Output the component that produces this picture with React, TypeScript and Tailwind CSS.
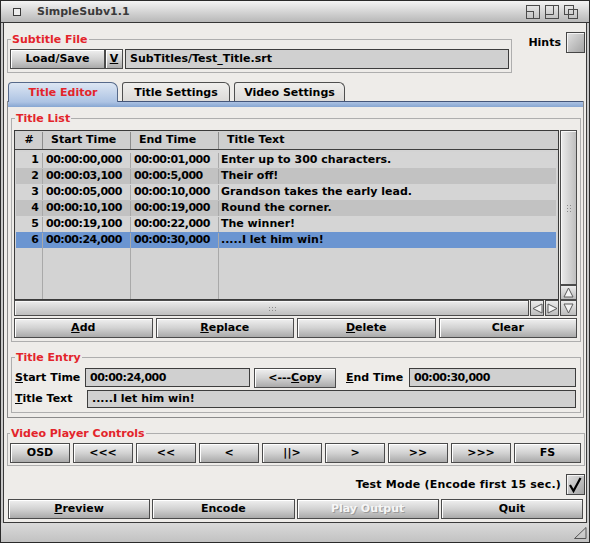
import type { ReactNode } from 'react';

type Row = [string, string, string, string];

const rows: Row[] = [
  ['1', '00:00:00,000', '00:00:01,000', 'Enter up to 300 characters.'],
  ['2', '00:00:03,100', '00:00:5,000', 'Their off!'],
  ['3', '00:00:05,000', '00:00:10,000', 'Grandson takes the early lead.'],
  ['4', '00:00:10,100', '00:00:19,000', 'Round the corner.'],
  ['5', '00:00:19,100', '00:00:22,000', 'The winner!'],
  ['6', '00:00:24,000', '00:00:30,000', '.....I let him win!'],
];

const videoButtons = ['OSD', '<<<', '<<', '<', '||>', '>', '>>', '>>>'];

function Btn({
  children,
  className = '',
  disabled = false,
}: {
  children: ReactNode;
  className?: string;
  disabled?: boolean;
}) {
  return (
    <div
      className={`flex h-[20px] items-center justify-center border border-[#4b4b4b] bg-linear-to-b from-[#f0f0f0] via-[#d2d2d2] to-[#aaaaaa] pt-[1px] shadow-[inset_1px_1px_0_#ffffff] ${
        disabled ? 'text-[#f6f6f6] [text-shadow:1px_1px_0_#9a9a9a]' : 'text-black'
      } ${className}`}
    >
      {children}
    </div>
  );
}

function Field({ children, className = '' }: { children?: ReactNode; className?: string }) {
  return (
    <div className={`flex items-center border border-[#3d3d3d] bg-[#d0d0d0] pt-[1px] pl-[4px] ${className}`}>
      {children}
    </div>
  );
}

function Group({
  label,
  className = '',
  legendClass = 'ml-[1px]',
  children,
}: {
  label: string;
  className?: string;
  legendClass?: string;
  children: ReactNode;
}) {
  return (
    <fieldset className={`min-w-0 border border-[#aeaeae] ${className}`}>
      <legend className={`px-[1px] leading-[14px] text-[#e3242b] ${legendClass}`}>
        <span className="relative top-[1px]">{label}</span>
      </legend>
      {children}
    </fieldset>
  );
}

function CheckBox({ checked = false }: { checked?: boolean }) {
  return (
    <div className="flex h-[21px] w-[19px] items-center justify-center border border-[#454545] bg-linear-to-br from-[#e2e2e2] to-[#a4a4a4] shadow-[inset_1px_1px_0_#f4f4f4]">
      {checked && (
        <svg width="17" height="19" viewBox="0 0 17 19">
          <path d="M3 10 L6.5 16 L13.5 3" fill="none" stroke="#000" strokeWidth="2.2" />
        </svg>
      )}
    </div>
  );
}

function Arrow({ dir, className = '' }: { dir: 'up' | 'down' | 'left' | 'right'; className?: string }) {
  const pts = {
    up: '5.5,1 10,10 1,10',
    down: '1,1 10,1 5.5,10',
    left: '1,5.5 10,1 10,10',
    right: '1,1 10,5.5 1,10',
  }[dir];
  return (
    <div
      className={`flex items-center justify-center border border-[#4b4b4b] bg-linear-to-b from-[#ececec] to-[#bdbdbd] ${className}`}
    >
      <svg width="11" height="11" viewBox="0 0 11 11">
        <polygon points={pts} fill="#f4f4f4" stroke="#5a5a5a" strokeWidth="1" />
      </svg>
    </div>
  );
}

function Dots({ vertical }: { vertical?: boolean }) {
  const w = vertical ? 5 : 8;
  const h = vertical ? 8 : 5;
  const dots = [];
  for (let i = 0; i < 3; i++) {
    for (let j = 0; j < 2; j++) {
      const x = vertical ? 1 + j * 3 : 1 + i * 3;
      const y = vertical ? 1 + i * 3 : 1 + j * 3;
      dots.push(<rect key={`${i}-${j}`} x={x} y={y} width="1" height="1" fill="#8c8c8c" />);
    }
  }
  return (
    <svg width={w} height={h} viewBox={`0 0 ${w} ${h}`}>
      {dots}
    </svg>
  );
}

function TitleGadgets() {
  return (
    <div className="ml-auto mr-[11px] flex gap-[5px]">
      <svg width="14" height="14" viewBox="0 0 14 14">
        <rect x="0.5" y="0.5" width="13" height="13" fill="none" stroke="#4a4a4a" />
        <rect x="0.5" y="6.5" width="7" height="7" fill="none" stroke="#4a4a4a" />
      </svg>
      <svg width="14" height="14" viewBox="0 0 14 14">
        <rect x="0.5" y="0.5" width="13" height="13" fill="none" stroke="#4a4a4a" />
        <path d="M8.5 0.5 V9.5 H0.5" fill="none" stroke="#4a4a4a" />
      </svg>
      <svg width="14" height="14" viewBox="0 0 14 14">
        <rect x="0.5" y="0.5" width="9" height="9" fill="none" stroke="#4a4a4a" />
        <rect x="4.5" y="4.5" width="9" height="9" fill="none" stroke="#4a4a4a" />
      </svg>
    </div>
  );
}

function TitleList() {
  return (
    <Group label="Title List" className="pl-[2px] pr-[3px] pt-[5px] pb-[3px]">
      <div className="grid grid-cols-[545px_17px] grid-rows-[170px_16px] gap-x-[1px]">
        <div className="flex flex-col border border-[#3a3a3a] bg-[#d3d3d3]">
          <div className="flex h-[19px] shrink-0 border-b border-[#3f3f3f] bg-[#cfcfcf] pt-[1px] pl-[1px] pr-[2px]">
            <div className="flex w-[27px] items-center justify-center border-r border-[#8d8d8d]">#</div>
            <div className="flex w-[88px] items-center border-r border-[#8d8d8d] pl-[8px]">Start Time</div>
            <div className="flex w-[88px] items-center border-r border-[#8d8d8d] pl-[8px]">End Time</div>
            <div className="flex flex-1 items-center pl-[8px]">Title Text</div>
          </div>
          <div className="flex flex-1 flex-col pt-[2px] pl-[1px] pr-[2px]">
            {rows.map(([n, start, end, text], i) => (
              <div
                key={n}
                className={`flex h-[16px] shrink-0 pt-[1px] ${
                  i === 5 ? 'bg-[#6b95d1]' : i % 2 === 1 ? 'bg-[#c2c2c2]' : 'bg-[#d5d5d5]'
                }`}
              >
                <div className="flex w-[27px] items-center justify-end border-r border-[#a9a9a9] pr-[3px]">{n}</div>
                <div className="flex w-[88px] items-center border-r border-[#a9a9a9] pl-[3px] tracking-[-0.5px]">
                  {start}
                </div>
                <div className="flex w-[88px] items-center border-r border-[#a9a9a9] pl-[3px] tracking-[-0.5px]">
                  {end}
                </div>
                <div className="flex flex-1 items-center whitespace-nowrap pl-[2px]">{text}</div>
              </div>
            ))}
            <div className="flex flex-1">
              <div className="w-[27px] border-r border-[#a9a9a9]" />
              <div className="w-[88px] border-r border-[#a9a9a9]" />
              <div className="w-[88px] border-r border-[#a9a9a9]" />
            </div>
          </div>
        </div>
        <div className="flex flex-col">
          <div className="flex flex-1 items-center justify-center border border-[#4b4b4b] bg-linear-to-r from-[#ececec] to-[#bfbfbf] shadow-[inset_1px_1px_0_#f8f8f8]">
            <Dots vertical />
          </div>
          <Arrow dir="up" className="h-[15px]" />
        </div>
        <div className="flex gap-[1px]">
          <div className="flex flex-1 items-center justify-center border border-[#4b4b4b] bg-linear-to-b from-[#ececec] to-[#bfbfbf] shadow-[inset_1px_1px_0_#f8f8f8]">
            <Dots />
          </div>
          <Arrow dir="left" className="w-[14px]" />
          <Arrow dir="right" className="w-[14px]" />
        </div>
        <Arrow dir="down" />
      </div>
      <div className="mt-[2px] flex gap-[3px]">
        <Btn className="flex-1">
          <u>A</u>dd
        </Btn>
        <Btn className="flex-1">
          <u>R</u>eplace
        </Btn>
        <Btn className="flex-1">
          <u>D</u>elete
        </Btn>
        <Btn className="flex-1">Clear</Btn>
      </div>
    </Group>
  );
}

function TitleEntry() {
  return (
    <Group label="Title Entry" legendClass="ml-0" className="mt-[8px] pl-[3px] pr-[4px] pt-[4px] pb-[4px]">
      <div className="flex h-[19px]">
        <div className="flex w-[70px] items-center pt-[1px]">
          <u>S</u>tart Time
        </div>
        <Field className="w-[165px] tracking-[-0.5px]">00:00:24,000</Field>
        <Btn className="ml-[4px] h-[19px] w-[82px]">
          {'<---'}
          <u>C</u>opy
        </Btn>
        <div className="ml-[10px] flex w-[59px] items-center pt-[1px]">
          <u>E</u>nd Time
        </div>
        <Field className="ml-[4px] flex-1 tracking-[-0.5px]">00:00:30,000</Field>
      </div>
      <div className="mt-[3px] flex h-[18px]">
        <div className="flex w-[72px] items-center pt-[1px]">
          <u>T</u>itle Text
        </div>
        <Field className="flex-1">.....I let him win!</Field>
      </div>
    </Group>
  );
}

export default function App() {
  return (
    <div className="flex h-[543px] w-[590px] flex-col border border-[#2a2a2a] bg-[#c8c8c8] font-['DejaVu_Sans',sans-serif] text-[11px] font-bold text-black">
      <div className="flex h-[22px] shrink-0 items-center border-b border-[#353535] bg-linear-to-b from-[#f4f4f4] to-[#b8b8b8]">
        <div className="ml-[12px] h-[8px] w-[8px] border border-[#3a3a3a] bg-[#ececec]" />
        <span className="ml-[16px] pt-[2px] text-[#3a3a3a]">SimpleSubv1.1</span>
        <TitleGadgets />
      </div>

      <div className="mx-[2px] flex h-[500px] shrink-0 flex-col border-x border-b border-[#3a3a3a] bg-[#eeece9]">
        <div className="flex items-start pt-[9px] pl-[3px] pr-[1px]">
          <Group label="Subtitle File" className="w-[505px] px-[2px] pt-[3px] pb-[3px]">
            <div className="flex h-[20px]">
              <Btn className="w-[95px]">Load/Save</Btn>
              <Btn className="w-[18px]">
                <u>V</u>
              </Btn>
              <Field className="ml-[2px] flex-1">SubTitles/Test_Title.srt</Field>
            </div>
          </Group>
          <div className="ml-auto flex items-center gap-[5px]">
            <span className="pt-[1px]">Hints</span>
            <CheckBox />
          </div>
        </div>

        <div className="ml-[4px] mt-[9px] flex items-end gap-[4px]">
          <div className="relative z-10 -mb-px flex h-[20px] w-[110px] items-center justify-center rounded-tl-[4px] rounded-tr-[7px] border-x border-t border-[#56698a] bg-linear-to-b from-[#dce6f3] to-[#adc3e3] pt-[1px] text-[#e3242b]">
            Title Editor
          </div>
          <div className="flex h-[19px] w-[108px] items-center justify-center rounded-tl-[3px] rounded-tr-[6px] border-x border-t border-[#4f4f4f] bg-linear-to-b from-[#f0efed] to-[#dcdad8] pt-[2px]">
            Title Settings
          </div>
          <div className="flex h-[19px] w-[111px] items-center justify-center rounded-tl-[3px] rounded-tr-[6px] border-x border-t border-[#4f4f4f] bg-linear-to-b from-[#f0efed] to-[#dcdad8] pt-[2px]">
            Video Settings
          </div>
        </div>

        <div className="ml-[3px] mr-[2px] border-x border-b border-[#8a8a8a]">
          <div className="h-[6px] border-t border-[#44567a] bg-linear-to-b from-[#adc3e3] to-[#87a6d2]" />
          <div className="pt-[4px] pl-[3px] pr-[2px] pb-[4px]">
            <TitleList />
            <TitleEntry />
          </div>
        </div>

        <Group
          label="Video Player Controls"
          legendClass="ml-0"
          className="mt-[8px] ml-[3px] mr-[1px] pl-[2px] pr-[3px] pt-[3px] pb-[2px]"
        >
          <div className="flex gap-[3px]">
            {videoButtons.map((b) => (
              <Btn key={b} className="w-[60px]">
                {b}
              </Btn>
            ))}
            <Btn className="flex-1">FS</Btn>
          </div>
        </Group>

        <div className="mt-[8px] flex items-center justify-end gap-[5px] pr-[1px]">
          <span className="pt-[1px] tracking-[0.2px]">Test Mode (Encode first 15 sec.)</span>
          <CheckBox checked />
        </div>

        <div className="mt-[4px] flex gap-[2px] pl-[4px] pr-[3px]">
          <Btn className="flex-1">
            <u>P</u>review
          </Btn>
          <Btn className="flex-1">Encode</Btn>
          <Btn className="flex-1" disabled>
            Play Output
          </Btn>
          <Btn className="flex-1">Quit</Btn>
        </div>
      </div>

      <div className="flex flex-1 items-end justify-end bg-linear-to-b from-[#dadada] to-[#c2c2c2] pr-[2px] pb-[3px]">
        <svg width="13" height="12" viewBox="0 0 13 12">
          <polygon points="12,0.5 12,11.5 0.5,11.5" fill="none" stroke="#555" />
        </svg>
      </div>
    </div>
  );
}
